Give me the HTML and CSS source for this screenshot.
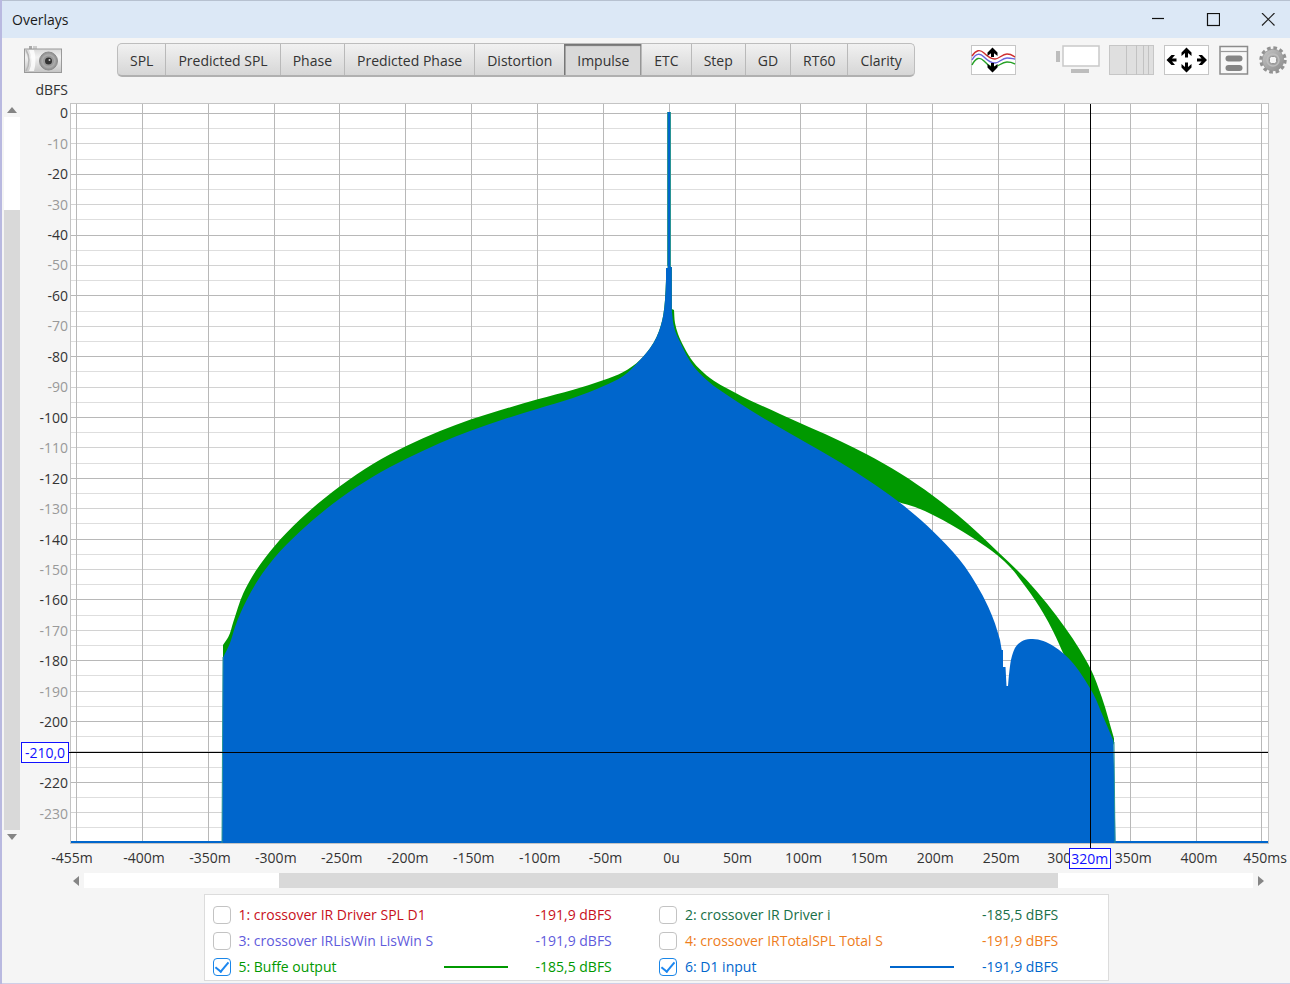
FILE: index.html
```html
<!DOCTYPE html>
<html lang="en">
<head>
<meta charset="utf-8">
<title>Overlays</title>
<link rel="stylesheet" href="styles.css">
</head>
<body>
<div class="window">
  <header class="titlebar">
    <h1 class="title">Overlays</h1>
    <div class="window-controls">
      <button class="win-btn" aria-label="Minimize"><svg width="14" height="14" viewBox="0 0 14 14"><path d="M1 5.500H13" stroke="#111" stroke-width="1.200"/></svg></button>
      <button class="win-btn" aria-label="Maximize"><svg width="14" height="14" viewBox="0 0 14 14"><rect x="1.500" y=".5" width="12" height="12" fill="none" stroke="#111" stroke-width="1.200"/></svg></button>
      <button class="win-btn" aria-label="Close"><svg width="14" height="14" viewBox="0 0 14 14"><path d="M1 0L13.500 12.500M13.500 0L1 12.500" stroke="#222" stroke-width="1.200"/></svg></button>
    </div>
  </header>

  <div class="toolbar">
    <button class="icon-btn camera" aria-label="Capture">
      <svg width="40" height="28" viewBox="0 0 40 28">
        <defs>
          <linearGradient id="cam" x1="0" y1="0" x2="0" y2="1"><stop offset="0" stop-color="#d8d8d8"/><stop offset=".35" stop-color="#f2f2f2"/><stop offset="1" stop-color="#c4c4c4"/></linearGradient>
          <radialGradient id="lens"><stop offset="0" stop-color="#444"/><stop offset=".3" stop-color="#777"/><stop offset=".6" stop-color="#b4b4b4"/><stop offset="1" stop-color="#8a8a8a"/></radialGradient>
        </defs>
        <rect x="6" y="0" width="3" height="3" fill="#aaa"/><rect x="10" y="0" width="4" height="3" fill="#ccc"/>
        <rect x="1.500" y="3" width="37" height="23.500" fill="url(#cam)" stroke="#999"/>
        <path d="M3 4Q9 14 3 25" fill="none" stroke="#b5b5b5" stroke-width="1.500"/>
        <path d="M6 4Q11 14 6 25H11Q14 14 11 4Z" fill="#fff" opacity=".8"/>
        <circle cx="25.500" cy="15" r="9" fill="url(#lens)" stroke="#8b8b8b"/>
        <circle cx="25.500" cy="15" r="5.500" fill="#9a9a9a"/>
        <circle cx="25.500" cy="15" r="3.500" fill="#333"/>
        <circle cx="26.500" cy="14" r="1" fill="#ccc"/>
      </svg>
    </button>
    <nav class="tabs">
      <button class="tab">SPL</button>
      <button class="tab">Predicted SPL</button>
      <button class="tab">Phase</button>
      <button class="tab">Predicted Phase</button>
      <button class="tab">Distortion</button>
      <button class="tab active" aria-pressed="true">Impulse</button>
      <button class="tab">ETC</button>
      <button class="tab">Step</button>
      <button class="tab">GD</button>
      <button class="tab">RT60</button>
      <button class="tab">Clarity</button>
    </nav>
    <div class="tools">
      <button class="icon-btn separate" aria-label="Separate traces">
        <svg width="46" height="30" viewBox="0 0 46 30">
          <rect x=".5" y=".5" width="44" height="29" fill="#fff" stroke="#c6c6c6"/>
          <g fill="none" stroke-width="1.400">
            <path d="M1 11C5 5 9 4 13 8S20 14 24 14S31 9 36 9S42 11 44 12" stroke="#cf2f2f"/>
            <path d="M1 15C5 8 9 8 13 12S20 18 24 18S31 13 36 13S42 14 44 14" stroke="#6a63dc"/>
            <path d="M1 20C5 12 9 12 13 16S20 23 24 22S31 17 36 17S42 18 44 19" stroke="#24a024"/>
          </g>
          <path d="M21.500 2.500L26.500 7.500V11L23 8.200V12H20V8.200L16.500 11V7.500ZM21.500 27.500L26.500 22.500V19L23 21.800V18H20V21.800L16.500 19V22.500Z" fill="#000"/>
        </svg>
      </button>
      <button class="icon-btn monitor" aria-label="Scrollbars">
        <svg width="44" height="30" viewBox="0 0 44 30">
          <rect x="0" y="6" width="4" height="11" fill="#bdbdbd"/>
          <rect x="7" y="1" width="36" height="20" fill="#fff" stroke="#c9c9c9" stroke-width="1.500"/>
          <rect x="15" y="24" width="18" height="4" fill="#bdbdbd"/>
        </svg>
      </button>
      <button class="icon-btn" aria-label="Frequency axis">
        <svg width="46" height="30" viewBox="0 0 46 30">
          <rect x=".5" y=".5" width="44" height="29" fill="#dfdfdf" stroke="#c6c6c6"/>
          <path d="M17.500 0V30M27.500 0V30M34.500 0V30M39.500 0V30" stroke="#c2c2c2"/>
        </svg>
      </button>
      <button class="icon-btn" aria-label="Graph limits">
        <svg width="46" height="30" viewBox="0 0 46 30">
          <defs><path id="arrow" d="M0 -6L5 -1V2.500L1.500 -.5V4H-1.500V-.5L-5 2.500V-1Z"/></defs>
          <rect x=".5" y=".5" width="44" height="29" fill="#fff" stroke="#c6c6c6"/>
          <use href="#arrow" transform="translate(22.500 8.500)"/>
          <use href="#arrow" transform="translate(22.500 21.500) rotate(180)"/>
          <use href="#arrow" transform="translate(8.500 15) rotate(-90)"/>
          <use href="#arrow" transform="translate(37 15) rotate(90)"/>
        </svg>
      </button>
      <button class="icon-btn" aria-label="Controls panel">
        <svg width="30" height="30" viewBox="0 0 30 30">
          <rect x="1" y="1.500" width="27.500" height="27.500" fill="#f8f8f8" stroke="#8c8c8c" stroke-width="1.500"/>
          <path d="M1 6.500H28" stroke="#9a9a9a" stroke-width="1.200"/>
          <rect x="6.500" y="10.500" width="17" height="6" rx="3" fill="#858585"/>
          <rect x="6.500" y="20" width="17" height="6" rx="3" fill="#858585"/>
        </svg>
      </button>
      <button class="icon-btn gear" aria-label="Settings">
        <svg width="30" height="30" viewBox="-15 -15 30 30">
          <defs><linearGradient id="metal" x1="0" y1="0" x2="1" y2="1"><stop offset="0" stop-color="#c6c6c6"/><stop offset="1" stop-color="#8c8c8c"/></linearGradient></defs>
          <circle r="12" fill="none" stroke="#929292" stroke-width="3.400" stroke-dasharray="3.580 2.703"/>
          <circle r="10.800" fill="url(#metal)" stroke="#969696" stroke-width=".8"/>
          <circle r="6" fill="none" stroke="#bdbdbd" stroke-width="1.500"/>
          <rect x="-3.500" y="-3.500" width="7" height="7" rx="2" fill="#f5f5f5" stroke="#959595"/>
        </svg>
      </button>
    </div>
  </div>

  <div class="unit">dBFS</div>

  <main class="chart">
    <div class="vscroll">
      <button class="arrow up" aria-label="Scroll up"></button>
      <div class="vtrack"><div class="vthumb"></div></div>
      <button class="arrow down" aria-label="Scroll down"></button>
    </div>
    <div class="y-axis">
      <span>0</span><span>-10</span><span>-20</span><span>-30</span><span>-40</span><span>-50</span><span>-60</span><span>-70</span><span>-80</span><span>-90</span><span>-100</span><span>-110</span><span>-120</span><span>-130</span><span>-140</span><span>-150</span><span>-160</span><span>-170</span><span>-180</span><span>-190</span><span>-200</span><span></span><span>-220</span><span>-230</span>
    </div>
    <div class="plot">
      <svg class="graph" viewBox="71 104 1197 739" preserveAspectRatio="none" role="img" aria-label="Impulse response overlay">
        <path id="grid-5" class="grid-fine"/>
        <path id="grid-10" class="grid-mid"/>
        <path id="grid-20" class="grid-main"/>
        <path id="buffe" class="trace-green"/>
        <path id="d1" class="trace-blue"/>
        <path d="M70 842H1268" class="floor"/>
        <path d="M223 657L222 843M1114 742L1115 843M667.500 112V266M670.500 112V266" class="edge"/>
      </svg>
      <div class="cursor-h"></div>
      <div class="cursor-v"></div>
      <output class="readout readout-y">-210,0</output>
      <output class="readout readout-x">320m</output>
    </div>
  </main>

  <div class="x-axis">
    <span>-455m</span><span>-400m</span><span>-350m</span><span>-300m</span><span>-250m</span><span>-200m</span><span>-150m</span><span>-100m</span><span>-50m</span><span>0u</span><span>50m</span><span>100m</span><span>150m</span><span>200m</span><span>250m</span><span class="clipped">300</span><span>350m</span><span>400m</span><span>450ms</span>
  </div>

  <div class="hscroll">
    <button class="arrow left" aria-label="Scroll left"></button>
    <div class="htrack"><div class="hthumb"></div></div>
    <button class="arrow right" aria-label="Scroll right"></button>
  </div>

  <section class="legend">
    <div class="entry c1"><label><input type="checkbox">1: crossover IR Driver SPL D1</label><span class="value">-191,9 dBFS</span></div>
    <div class="entry c2"><label><input type="checkbox">2: crossover IR Driver i</label><span class="value">-185,5 dBFS</span></div>
    <div class="entry c3"><label><input type="checkbox">3: crossover IRLisWin LisWin S</label><span class="value">-191,9 dBFS</span></div>
    <div class="entry c4"><label><input type="checkbox">4: crossover IRTotalSPL Total S</label><span class="value">-191,9 dBFS</span></div>
    <div class="entry c5"><label><input type="checkbox" checked>5: Buffe output</label><i class="swatch"></i><span class="value">-185,5 dBFS</span></div>
    <div class="entry c6"><label><input type="checkbox" checked>6: D1 input</label><i class="swatch"></i><span class="value">-191,9 dBFS</span></div>
  </section>
</div>
<script src="chart.js"></script>
</body>
</html>
```
FILE: styles.css
```css
* { box-sizing: border-box; }
body {
  margin: 0;
  background: #b9b9e0;
  color: #333;
  font: 14px/20px "Open Sans", "Noto Sans", sans-serif;
  overflow: hidden;
}
button { padding: 0; border: 0; background: none; font: inherit; color: inherit; }
svg { display: block; }

.window {
  display: flex;
  flex-direction: column;
  height: 100vh;
  margin-left: 2px;
  border-bottom: 1px solid #cfcfe8;
  background: #f5f5f5;
  overflow: hidden;
}

.titlebar {
  display: flex;
  flex: none;
  align-items: center;
  justify-content: space-between;
  height: 38px;
  padding: 0 15px 0 10px;
  border-top: 1px solid #b7c1d0;
  background: #dce8f6;
}
.title { margin: 0; font-size: 14px; font-weight: 400; color: #1a1a1a; }
.window-controls { display: flex; gap: 41px; }

.toolbar {
  display: flex;
  flex: none;
  align-items: center;
  height: 44px;
  padding: 0 2px 0 21px;
}
.camera { margin-right: 54px; }
.tabs {
  display: flex;
  height: 34px;
  border: 1px solid #bdbdbd;
  border-bottom: 2px solid #b0b0b0;
  border-radius: 5px;
  background: linear-gradient(#f1f1f1, #d6d6d6);
}
.tab { padding: 2px 12px 0; border-left: 1px solid #b9b9b9; white-space: nowrap; }
.tab:first-child { border-left: 0; }
.tab.active {
  background: #d9d9d9;
  border-left-color: #777;
  box-shadow: inset 0 2px 1px #777, inset -1px 0 #999, inset 1px 0 #aaa;
}
.tools { display: flex; align-items: center; gap: 9px; margin-left: auto; }
.separate { margin-right: 30px; }

.unit { flex: none; width: 66px; height: 16px; line-height: 16px; text-align: right; }

.chart {
  display: grid;
  grid-template-columns: 18px 46px minmax(0, 1fr);
  flex: 1;
  min-height: 0;
  padding: 0 21px 0 2px;
}
.vscroll { display: flex; flex-direction: column; width: 16px; margin-top: 5px; }
.vtrack { display: flex; flex: 1; flex-direction: column; justify-content: flex-end; background: #fff; }
.vthumb { height: 87%; background: #d9d9d9; }
.arrow { display: grid; place-items: center; width: 16px; height: 14px; }
.arrow::before { content: ""; border: 5px solid transparent; }
.up::before { border-top: 0; border-bottom: 6px solid #858585; }
.down::before { border-bottom: 0; border-top: 6px solid #858585; }
.left::before { border-left: 0; border-right: 6px solid #858585; }
.right::before { border-right: 0; border-left: 6px solid #858585; }

.y-axis {
  display: flex;
  flex-direction: column;
  padding-bottom: 15px;
  text-align: right;
}
.y-axis span { display: flex; flex: 1; align-items: center; justify-content: flex-end; }
.y-axis span:nth-child(even) { color: #999; }

.plot {
  position: relative;
  margin: 5px 0 0 2px;
  border: 1px solid #c4c4c4;
  background: #fff;
}
.graph { width: 100%; height: 100%; }
.graph path { fill: none; }
.graph .grid-fine { stroke: #dedede; stroke-width: 1; }
.graph .grid-mid { stroke: #d2d2d2; stroke-width: 1; }
.graph .grid-main { stroke: #b8b8b8; stroke-width: 1; }
.graph .trace-green { fill: #090; }
.graph .trace-blue { fill: #06c; }
.graph .floor { stroke: #06c; stroke-width: 2; }
.graph .edge { stroke: #2a9494; stroke-width: 1; }

.cursor-h { position: absolute; top: 87.700%; left: -2px; right: 0; height: 1px; background: #000; }
.cursor-v { position: absolute; left: 85.100%; top: 0; bottom: -5px; width: 1px; background: #000; }
.readout {
  position: absolute;
  height: 21px;
  border: 1px solid #11f;
  background: #fff;
  color: #11f;
  line-height: 20px;
  text-align: center;
}
.readout-y { right: 100%; top: 87.700%; width: 48px; margin: -10px 2px 0 0; }
.readout-x { left: 85.100%; top: 100%; width: 42px; margin: 5px 0 0 -21px; z-index: 1; }

.x-axis {
  display: grid;
  grid-template-columns: 78px repeat(18, minmax(0, 1fr));
  flex: none;
  height: 30px;
  margin: 0 -8px 0 31px;
  padding-top: 5px;
  text-align: center;
}
.x-axis span { white-space: nowrap; }
.x-axis .clipped { padding-right: 16px; }

.hscroll { display: flex; flex: none; height: 15px; padding: 0 21px 0 66px; }
.htrack { flex: 1; background: #fff; }
.hthumb { width: 66.600%; height: 100%; margin-left: 16.700%; background: #d9d9d9; }
.hscroll .arrow { height: 15px; }

.legend {
  display: grid;
  grid-template-columns: 1fr 1fr;
  flex: none;
  align-self: center;
  width: 905px;
  margin: 6px 0 2px 20px;
  padding: 7px 2px 0 8px;
  border: 1px solid #dcdcdc;
  background: #fff;
}
.entry { display: grid; grid-template-columns: 231px 64px 1fr; align-items: center; height: 26px; }
.entry label { display: flex; align-items: center; white-space: nowrap; }
.entry input {
  appearance: none;
  display: grid;
  place-items: center;
  width: 18px;
  height: 18px;
  margin: 0 8px 0 0;
  border: 1px solid #c3c3c3;
  border-radius: 4px;
  background: #fff;
}
.entry input:checked { border-color: #1a86e8; }
.entry input:checked::before {
  content: "";
  width: 6px;
  height: 11px;
  margin-bottom: 3px;
  border: solid #1a86f0;
  border-width: 0 2px 2px 0;
  transform: rotate(40deg);
}
.swatch { height: 2px; background: currentColor; }
.value { grid-column: 3; padding-left: 28px; white-space: nowrap; }
.c1 { color: #c8101c; }
.c2 { color: #197048; }
.c3 { color: #5f5bdc; }
.c4 { color: #ee7d1c; }
.c5 { color: #090; }
.c6 { color: #06c; }
```
FILE: chart.js
```js
// Plot geometry: 0 dB at y = 113.5, 10 dB per 30.4 units; 0 s at x = 669.2, 50 ms per 65.85 units.
const X0 = 669.2, DX = 65.85, Y0 = 113.5, DY = 30.4;
const set = (id, d) => document.getElementById(id).setAttribute("d", d);

let fine = "", mid = "", main = "";
for (let k = 0; k < 48; k++) {
  const line = `M70 ${Math.floor(Y0 + k * DY / 2) + 0.5}H1268`;
  if (k % 4 === 0) main += line;
  else if (k % 2 === 0) mid += line;
  else fine += line;
}
for (let k = -9; k <= 9; k++) main += `M${Math.floor(X0 + k * DX) + 0.5} 103V843`;
set("grid-5", fine);
set("grid-10", mid);
set("grid-20", main);

// Chord-length spline through the points, as cubic segments.
const dist = (a, b) => Math.hypot(b[0] - a[0], b[1] - a[1]);
function tangent(p, i) {
  const a = p[i - 1] || p[i], b = p[i], c = p[i + 1] || p[i];
  const u = dist(a, b), v = dist(b, c);
  return [0, 1].map(k => {
    if (!u) return (c[k] - b[k]) / v;
    if (!v) return (b[k] - a[k]) / u;
    return ((b[k] - a[k]) / u * v + (c[k] - b[k]) / v * u) / (u + v);
  });
}
function smooth(p) {
  let d = `L${p[0]}`;
  for (let i = 0; i < p.length - 1; i++) {
    const b = p[i], c = p[i + 1], s = dist(b, c) / 3, t = tangent(p, i), r = tangent(p, i + 1);
    d += `C${b[0] + t[0] * s} ${b[1] + t[1] * s} ${c[0] - r[0] * s} ${c[1] - r[1] * s} ${c}`;
  }
  return d;
}

const spike = "L666 268H667.7V112H670.7V267H671.8V309";
const neck = [[640, 360], [650, 348.3], [656.7, 336.7], [661, 325], [663.3, 315], [665, 300], [666, 280]];

const greenLeft = [[223, 645], [228.3, 637], [233.3, 622], [243.3, 593.3], [256, 570.5], [274, 546.7], [300, 519.5], [340.3, 486],
  [373.3, 463.7], [406.3, 446], [440, 431], [471.3, 419.3], [500, 410.3], [537.7, 399.3], [573.3, 389.7], [603, 380.3], [623.3, 372], ...neck];
const greenRight = [[674, 310], [675, 323], [678, 334], [684, 347], [693.3, 362], [706.7, 375.5], [735.7, 393], [780, 414], [840, 441],
  [866.7, 454.3], [900, 473.3], [933, 495.7], [966.7, 522.7], [998.3, 552.3], [1026.7, 580], [1046.7, 603.3],
  [1065, 627.5], [1080, 650], [1090.7, 669], [1101.7, 697], [1114, 738.5]];
const greenInner = [[1064, 655], [1053.3, 631.7], [1043.3, 613.3], [1026.7, 588.3], [1010, 567], [998.3, 556], [973.3, 538.3],
  [953.3, 526], [933, 515], [915, 507], [899, 502.3]];
set("buffe", "M223 700" + smooth(greenLeft) + spike + smooth(greenRight) + "V745" + smooth(greenInner) + "V506Z");

const blueLeft = [[223, 657.7], [230, 643], [235, 627], [246.7, 600], [259, 578.5], [274, 558.3], [300, 531.5],
  [340.3, 498.3], [373.3, 476.5], [406.3, 458.8], [440, 443], [471.3, 430.5], [506.7, 418.3], [537.7, 408.7], [573, 398],
  [603, 386.3], [623.3, 376], ...neck];
const blueRight = [[672, 312], [674, 327], [682, 346], [693.3, 366], [706.7, 380], [735.7, 400.7], [766.7, 420], [805, 442], [840, 462.3],
  [866.7, 479.3], [899.3, 502.3], [915, 515], [940, 538.3], [965, 566.7], [976.7, 585], [988.3, 607], [995, 623.5], [1000, 640]];
const blueLobe = [[1008, 686], [1009.5, 670], [1011.7, 657], [1016.7, 645.5], [1023.3, 640.5], [1032.7, 639], [1043.3, 641],
  [1053.3, 646], [1064, 654], [1073.3, 663.5], [1085, 680], [1093.3, 694], [1103.3, 717], [1113.5, 741]];
set("d1", "M222 843" + smooth(blueLeft) + spike + smooth(blueRight) + "L1001.700 650H1003V667H1005.500L1006.500 686" +
  smooth(blueLobe) + "L1115.500 843Z");
```
